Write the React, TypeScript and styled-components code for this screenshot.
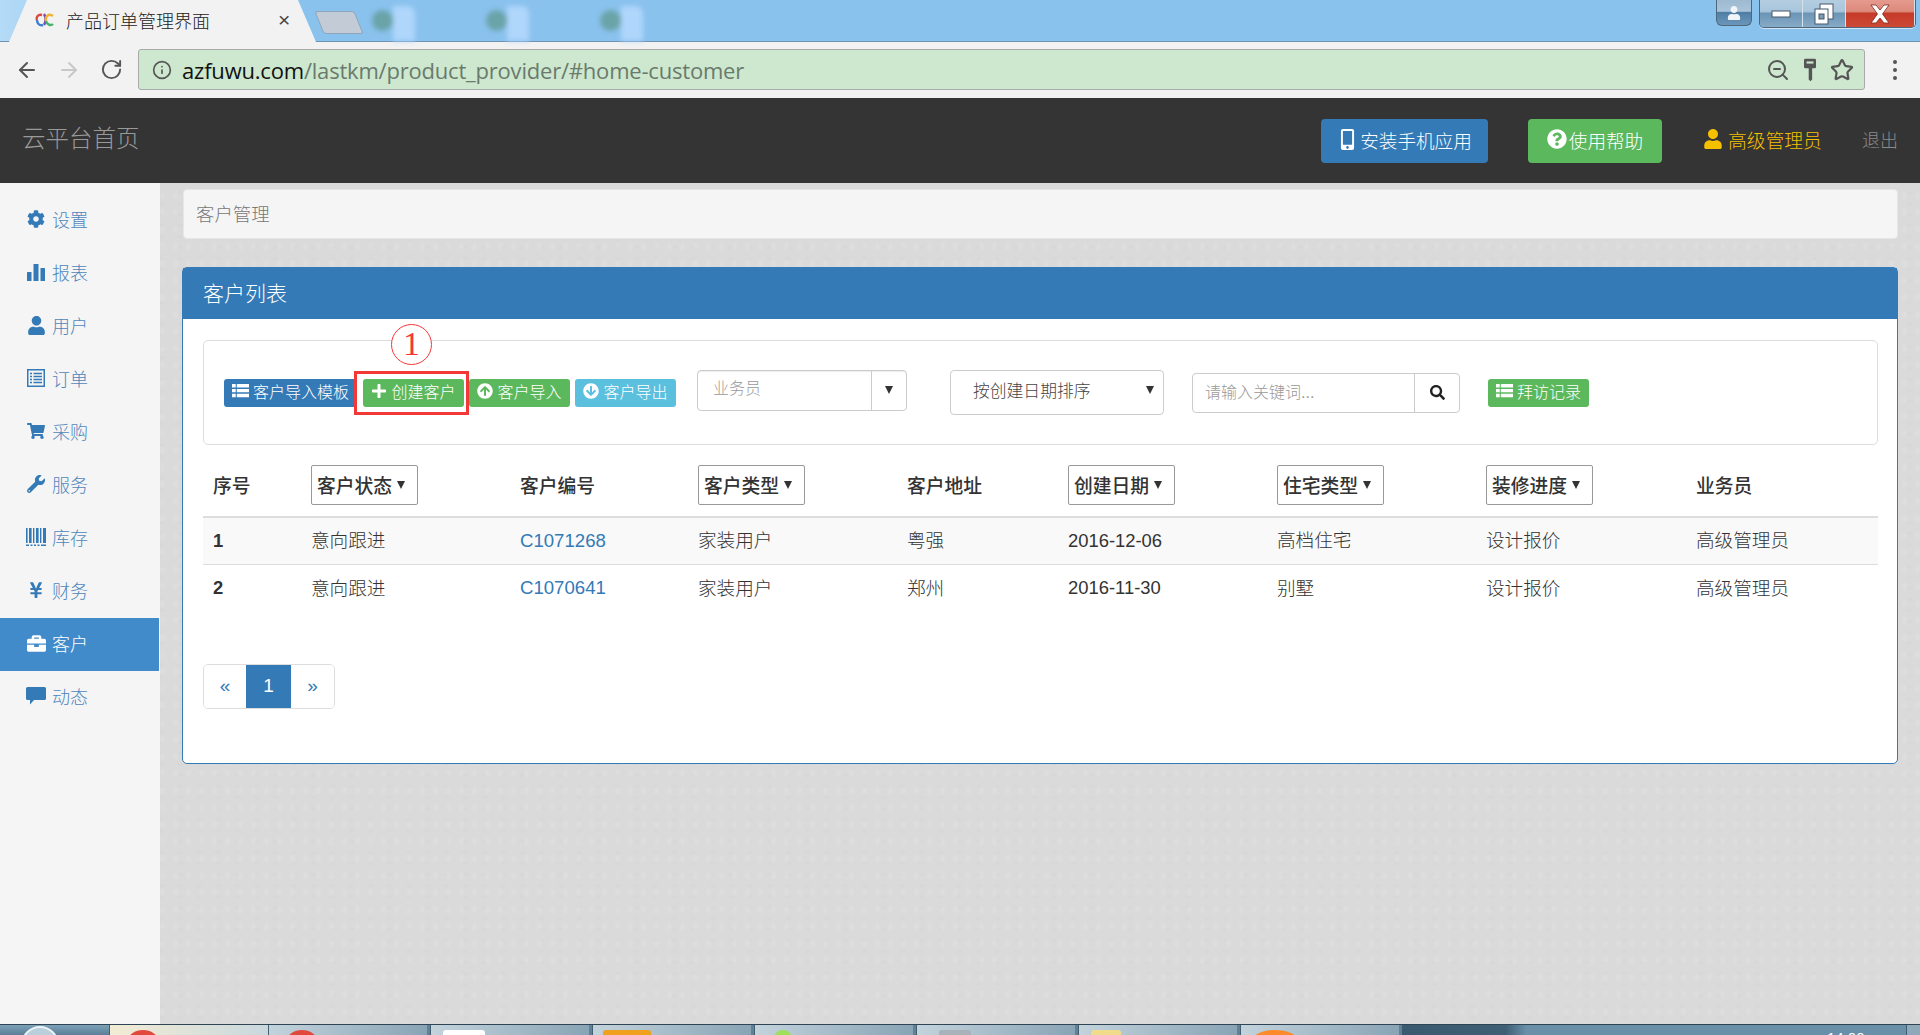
import React from 'react'
import styled, { createGlobalStyle } from 'styled-components'
import { FaCog, FaUser, FaShoppingCart, FaWrench, FaYenSign, FaBriefcase, FaMobileAlt, FaQuestionCircle, FaPlus, FaArrowCircleUp, FaArrowCircleDown, FaSearch } from 'react-icons/fa'
import { ArrowLeft, ArrowRight, RotateCw, Info, ZoomOut, Star } from 'lucide-react'

const FONT = `"Liberation Sans", "Noto Sans CJK SC", sans-serif`
const COLUMNS = '98px 209px 178px 209px 161px 209px 209px 210px 1fr'

const GlobalStyle = createGlobalStyle`
  html, body {
    margin: 0;
    padding: 0;
    height: 100%;
    overflow: hidden;
    font-family: ${FONT};
    color: #333;
  }
  * { box-sizing: border-box; }
`

const Screen = styled.div`
  width: 1920px;
  height: 1035px;
  display: flex;
  flex-direction: column;
  overflow: hidden;
  background-color: #dadada;
  background-image:
    radial-gradient(rgba(255, 255, 255, 0.1) 1px, transparent 4px),
    radial-gradient(rgba(0, 0, 0, 0.012) 1px, transparent 4px);
  background-size: 13px 17px, 19px 11px;
`

/* browser frame */
const TabStrip = styled.div`
  height: 42px;
  flex: none;
  display: flex;
  align-items: flex-end;
  padding-left: 9px;
  background: linear-gradient(90deg, #b4dbf7 0, #8ac2ee 8%, #8ac2ee 100%);
  border-bottom: 1px solid #6f93b3;
  position: relative;
`

const ActiveTab = styled.div`
  width: 307px;
  height: 42px;
  margin-bottom: -1px;
  display: flex;
  align-items: center;
  padding: 0 0 3px 26px;
  background: #f2f2f2;
  clip-path: polygon(0 100%, 18px 0, 289px 0, 307px 100%);
  font-size: 18px;
  font-weight: 300;
  color: #222;
`

const TabTitle = styled.span`
  margin-left: 11px;
  width: 212px;
`

const TabClose = styled.span`
  font-size: 21px;
  color: #444;
`

const NewTab = styled.div`
  width: 40px;
  height: 23px;
  margin: 0 0 7px 3px;
  background: #c3ccd6;
  border: 1px solid #8fa5ba;
  border-radius: 3px;
  transform: skewX(22deg);
`

const BlurredDoc = styled.div<{ $gap: number }>`
  width: 46px;
  height: 35px;
  flex: none;
  margin: 0 0 0 ${({ $gap }) => $gap}px;
  display: flex;
  align-items: flex-start;
  filter: blur(2.5px);
`

const DocDot = styled.i`
  display: block;
  width: 21px;
  height: 21px;
  margin-top: 4px;
  border-radius: 50%;
  background: #6aa3a8;
`

const DocSheet = styled.i`
  display: block;
  width: 22px;
  height: 35px;
  border-radius: 0 8px 0 0;
  background: #afd6fb;
`

const WindowButtons = styled.div`
  position: absolute;
  top: 0;
  right: 4px;
  display: flex;
  align-items: flex-start;
`

const UserButton = styled.div`
  width: 36px;
  height: 26px;
  margin-right: 7px;
  display: flex;
  align-items: center;
  justify-content: center;
  background: linear-gradient(#9dbad2 0, #a9c4da 45%, #4f7ea5 50%, #6b96ba 100%);
  border: 1px solid #50667c;
  border-top: none;
  border-radius: 0 0 6px 6px;
  color: #f2f5f8;
`

const ControlGroup = styled.div`
  display: flex;
  height: 28px;
  border: 1px solid #50667c;
  border-top: none;
  border-radius: 0 0 5px 5px;
  overflow: hidden;
  box-shadow: 0 1px 0 #cfe4f5;
`

const ControlButton = styled.div<{ $width: number; $danger?: boolean }>`
  width: ${({ $width }) => $width}px;
  display: flex;
  align-items: center;
  justify-content: center;
  border-right: 1px solid #d5e0ea;
  background: ${({ $danger }) =>
    $danger
      ? 'linear-gradient(#e59a8e 0, #dc8a7c 42%, #c63a28 50%, #cc4a36 100%)'
      : 'linear-gradient(#b4cde0 0, #a8c6dc 42%, #6c95b5 50%, #86abc7 100%)'};
`

const Toolbar = styled.div`
  height: 56px;
  flex: none;
  display: flex;
  align-items: center;
  background: #f2f2f2;
  padding: 0 0 1px 15px;
`

const NavIcon = styled.span<{ $gap?: number }>`
  display: flex;
  margin-left: ${({ $gap = 0 }) => $gap}px;
`

const AddressBar = styled.div`
  width: 1727px;
  height: 41px;
  margin-left: 15px;
  display: flex;
  align-items: center;
  padding: 0 10px 0 13px;
  background: #cde8cf;
  border: 1px solid #aaa;
  border-radius: 3px;
`

const Url = styled.div`
  flex: 1;
  margin-left: 10px;
  font-family: "Open Sans", sans-serif;
  font-size: 22px;
  letter-spacing: -0.2px;
  color: #6a7a6d;
`

const UrlHost = styled.span`
  color: #111;
`

const MenuDots = styled.div`
  margin-left: 28px;
  display: flex;
  flex-direction: column;
  gap: 4px;
`

const MenuDot = styled.i`
  display: block;
  width: 4px;
  height: 4px;
  border-radius: 50%;
  background: #555;
`

/* app header */
const Header = styled.header`
  height: 85px;
  flex: none;
  display: flex;
  align-items: center;
  padding-left: 22px;
  background: #343434;
`

const Brand = styled.div`
  width: 1299px;
  padding-bottom: 7px;
  font-size: 23.5px;
  font-weight: 300;
  color: #999;
`

const HeaderButton = styled.div<{ $color: string; $width: number }>`
  width: ${({ $width }) => $width}px;
  height: 44px;
  margin-right: ${({ $width }) => ($width > 140 ? 40 : 41)}px;
  padding-bottom: 3px;
  display: flex;
  align-items: center;
  justify-content: center;
  gap: 2px;
  background: ${({ $color }) => $color};
  border-radius: 4px;
  font-size: 18.6px;
  font-weight: 300;
  color: #fff;
`

const HeaderUser = styled.div`
  display: flex;
  align-items: center;
  gap: 5px;
  width: 159px;
  padding-bottom: 3px;
  font-size: 18.8px;
  font-weight: 300;
  color: #f5c000;
`

const Logout = styled.div`
  padding-bottom: 3px;
  font-size: 18px;
  font-weight: 300;
  color: #8a8a8a;
`

/* page */
const Main = styled.div`
  flex: 1;
  display: flex;
  min-height: 0;
`

const Sidebar = styled.nav`
  width: 160px;
  flex: none;
  padding-top: 11px;
  background: #f5f5f5;
`

const NavItem = styled.div<{ $active?: boolean }>`
  height: 53px;
  width: 159px;
  display: flex;
  align-items: center;
  gap: 6px;
  padding: 0 0 3px 26px;
  font-size: 18px;
  font-weight: 300;
  color: ${({ $active }) => ($active ? '#fff' : '#4f86bb')};
  background: ${({ $active }) => ($active ? '#428bca' : 'transparent')};
`

const NavGlyph = styled.span<{ $active?: boolean }>`
  width: 20px;
  display: flex;
  justify-content: center;
  color: ${({ $active }) => ($active ? '#fff' : '#337ab7')};
`

const Content = styled.main`
  flex: 1;
  padding: 6px 22px 0 23px;
`

const Breadcrumb = styled.div`
  height: 50px;
  display: flex;
  align-items: center;
  padding: 0 0 2px 12px;
  background: #f5f5f5;
  border: 1px solid #e6e6e6;
  border-radius: 4px;
  font-size: 18.4px;
  font-weight: 300;
  color: #777;
`

const Panel = styled.section`
  height: 497px;
  margin: 28px 0 0 -1px;
  padding: 0 19px 0 20px;
  background: #fff;
  border: 1px solid #337ab7;
  border-radius: 5px;
`

const PanelHeading = styled.h2`
  height: 51px;
  margin: 0 -19px 21px -20px;
  padding: 0 0 4px 20px;
  display: flex;
  align-items: center;
  background: #337ab7;
  font-size: 21px;
  font-weight: 300;
  color: #fff;
`

const FilterBar = styled.div`
  height: 105px;
  display: flex;
  align-items: center;
  padding-left: 20px;
  border: 1px solid #ddd;
  border-radius: 5px;
`

const SmallButton = styled.div<{ $color: string; $width: number }>`
  width: ${({ $width }) => $width}px;
  height: 28px;
  flex: none;
  padding-bottom: 3px;
  display: flex;
  align-items: center;
  justify-content: center;
  gap: 4px;
  background: ${({ $color }) => $color};
  border-radius: 3px;
  font-size: 16px;
  font-weight: 300;
  color: #fff;
`

const ButtonSlot = styled.div<{ $left: number; $right?: number }>`
  position: relative;
  flex: none;
  margin: 0 ${({ $right = 0 }) => $right}px 0 ${({ $left }) => $left}px;
`

const Highlight = styled.div`
  position: absolute;
  left: -9px;
  right: -5px;
  top: -8px;
  bottom: -8px;
  border: 3px solid #f33838;
`

const StepBadge = styled.div`
  position: absolute;
  left: 28px;
  top: -55px;
  width: 41px;
  height: 41px;
  display: flex;
  align-items: center;
  justify-content: center;
  border: 1px solid #f33838;
  border-radius: 50%;
  background: #fff;
  font-family: "Liberation Serif", serif;
  font-size: 34px;
  line-height: 1;
  color: #f33838;
`

const ComboBox = styled.div`
  width: 210px;
  height: 41px;
  flex: none;
  margin-top: -5px;
  display: flex;
  background: #fff;
  border: 1px solid #ccc;
  border-radius: 4px;
  box-shadow: inset 0 1px 1px rgba(0, 0, 0, 0.075);
`

const ComboValue = styled.div`
  flex: 1;
  padding: 0 0 6px 15px;
  display: flex;
  align-items: center;
  font-size: 16px;
  font-weight: 300;
  color: #999;
`

const ComboToggle = styled.div`
  width: 35px;
  display: flex;
  align-items: center;
  justify-content: center;
  border-left: 1px solid #ccc;
`

const Caret = styled.i<{ $size?: number; $color?: string }>`
  display: inline-block;
  flex: none;
  border-left: ${({ $size = 4 }) => $size}px solid transparent;
  border-right: ${({ $size = 4 }) => $size}px solid transparent;
  border-top: ${({ $size = 4 }) => $size * 2}px solid ${({ $color = '#333' }) => $color};
`

const SortSelect = styled.div`
  width: 214px;
  height: 45px;
  flex: none;
  margin: -1px 0 0 43px;
  display: flex;
  align-items: center;
  justify-content: space-between;
  padding: 0 9px 4px 22px;
  background: #fff;
  border: 1px solid #ccc;
  border-radius: 4px;
  font-size: 16.8px;
  font-weight: 300;
  color: #444;
`

const SearchGroup = styled.div`
  width: 268px;
  height: 40px;
  flex: none;
  margin-left: 28px;
  display: flex;
  border: 1px solid #ccc;
  border-radius: 4px;
`

const SearchInput = styled.div`
  flex: 1;
  display: flex;
  align-items: center;
  padding: 0 0 3px 12px;
  font-size: 16px;
  font-weight: 300;
  color: #999;
`

const SearchButton = styled.div`
  width: 45px;
  display: flex;
  align-items: center;
  justify-content: center;
  border-left: 1px solid #ccc;
  color: #222;
`

const TableHead = styled.div`
  height: 73px;
  display: grid;
  grid-template-columns: ${COLUMNS};
  align-items: center;
  padding-top: 8px;
  border-bottom: 2px solid #ddd;
`

const HeadCell = styled.div`
  padding: 0 0 0 10px;
  font-size: 18.8px;
  font-weight: 500;
  color: #333;
`

const HeadFilter = styled.div`
  width: 107px;
  height: 40px;
  margin-left: 10px;
  display: flex;
  align-items: center;
  gap: 5px;
  padding: 0 0 0 5px;
  background: #fff;
  border: 1px solid #999;
  border-radius: 2px;
  font-size: 18.8px;
  font-weight: 500;
  color: #333;
`

const TableRow = styled.div<{ $striped?: boolean }>`
  height: 47px;
  display: grid;
  grid-template-columns: ${COLUMNS};
  align-items: center;
  background: ${({ $striped }) => ($striped ? '#f9f9f9' : '#fff')};
  border-bottom: ${({ $striped }) => ($striped ? '1px solid #ddd' : 'none')};
`

const Cell = styled.div`
  padding: 0 0 5px 10px;
  font-size: 18.6px;
  font-weight: 300;
  color: #333;
`

const NumberCell = styled.div<{ $bold?: boolean }>`
  padding: 0 0 1px 10px;
  font-size: 18.4px;
  font-weight: ${({ $bold }) => ($bold ? 700 : 400)};
  color: #333;
`

const CodeLink = styled(NumberCell)`
  font-size: 18.6px;
  color: #337ab7;
`

const Pagination = styled.div`
  width: 132px;
  height: 45px;
  margin-top: 52px;
  display: flex;
  border: 1px solid #ddd;
  border-radius: 5px;
  overflow: hidden;
  font-size: 19px;
`

const PageLink = styled.div<{ $active?: boolean; $width: number }>`
  width: ${({ $width }) => $width}px;
  display: flex;
  align-items: center;
  justify-content: center;
  padding-bottom: 2px;
  color: ${({ $active }) => ($active ? '#fff' : '#337ab7')};
  background: ${({ $active }) => ($active ? '#337ab7' : '#fff')};
`

/* windows taskbar, only its top edge is in the picture */
const Taskbar = styled.div`
  height: 11px;
  flex: none;
  display: flex;
  overflow: hidden;
  background: #5f8199;
  border-top: 1px solid #2f4454;
`

const StartArea = styled.div`
  width: 109px;
  flex: none;
  display: flex;
  padding: 1px 0 0 21px;
  background: linear-gradient(#7ba0b8, #5c7f97);
`

const Orb = styled.div`
  width: 38px;
  height: 38px;
  border-radius: 50%;
  background: #b9cfdc;
  border: 2px solid #ecf3f7;
`

const TaskButton = styled.div<{ $active?: boolean }>`
  width: 159px;
  flex: none;
  margin-right: ${({ $active }) => ($active ? 0 : 3)}px;
  display: flex;
  padding-top: 5px;
  background: ${({ $active }) =>
    $active ? 'linear-gradient(90deg, #f3ecd4, #c9d8de)' : 'linear-gradient(90deg, #c3d3dc, #88a4b5)'};
  border-left: 1px solid #44606f;
`

const TaskGlyph = styled.i<{ $color: string; $left: number; $width: number; $round?: boolean }>`
  display: block;
  width: ${({ $width }) => $width}px;
  height: 22px;
  margin-left: ${({ $left }) => $left}px;
  background: ${({ $color }) => $color};
  border-radius: ${({ $round }) => ($round ? '50%' : '3px 3px 0 0')};
`

const Tray = styled.div`
  flex: 1;
  display: flex;
  padding: 3px 0 0 425px;
  background: linear-gradient(90deg, #3a5a70 0, #3f5f75 20%, #6a8fa8 24%, #6a8fa8 100%);
  font-size: 15px;
  line-height: 20px;
  color: #fff;
`

const ShowDesktop = styled.div`
  width: 14px;
  margin: -3px 0 0 auto;
  background: #8fa9ba;
  border-left: 1px solid #3f5f75;
`

/* glyphs that the icon packs draw too differently */
const StatsIcon = ({ size = 18 }: { size?: number }) => (
  <svg width={size} height={size} viewBox="0 0 18 18" fill="currentColor">
    <rect x="0" y="9" width="4.5" height="9" rx="0.5" />
    <rect x="6.5" y="1" width="5" height="17" rx="0.5" />
    <rect x="13.5" y="5" width="4.5" height="13" rx="0.5" />
  </svg>
)

const ListAltIcon = () => (
  <svg width="18" height="18" viewBox="0 0 18 18" fill="none" stroke="currentColor">
    <rect x="0.75" y="0.75" width="16.5" height="16.5" strokeWidth="1.5" />
    <path d="M3 4.5h2M6.5 4.5H15M3 7.5h2M6.5 7.5H15M3 10.5h2M6.5 10.5H15M3 13.5h2M6.5 13.5H15" strokeWidth="1.6" />
  </svg>
)

const BarcodeIcon = () => (
  <svg width="20" height="18" viewBox="0 0 20 18" fill="currentColor">
    <path d="M0 0h1.6v15H0zM3 0h2.6v15H3zM7 0h1.4v15H7zM10 0h2.6v15H10zM14 0h1.4v15H14zM17 0h3v15h-3zM0 16.4h3V18H0zM4.500 16.4h2V18h-2zM8 16.4h2V18H8zM11.500 16.4h2V18h-2zM15 16.4h5V18h-5z" />
  </svg>
)

const CommentIcon = () => (
  <svg width="20" height="18" viewBox="0 0 20 18" fill="currentColor">
    <path d="M1.500 0h17A1.500 1.500 0 0 1 20 1.500v10a1.500 1.500 0 0 1-1.500 1.500H8l-4 4.500V13H1.500A1.500 1.500 0 0 1 0 11.500v-10A1.500 1.500 0 0 1 1.500 0z" />
  </svg>
)

const RowsIcon = ({ size = 17 }: { size?: number }) => (
  <svg width={size} height={size} viewBox="0 0 16 16" fill="currentColor">
    <path d="M0 1h3.500v3.200H0zM4.500 1H16v3.200H4.500zM0 5.600h3.500v3.200H0zM4.500 5.600H16v3.200H4.500zM0 10.200h3.500v3.200H0zM4.500 10.200H16v3.200H4.500z" />
  </svg>
)

const KeyIcon = () => (
  <svg width="12" height="24" viewBox="0 0 14 26" fill="#555">
    <path d="M1.500 0h11A1.500 1.500 0 0 1 14 1.500v8A1.500 1.500 0 0 1 12.500 11H9.500v13l-2 2-2-2V11H1.500A1.500 1.500 0 0 1 0 9.500v-8A1.500 1.500 0 0 1 1.500 0z" />
    <rect x="3" y="3" width="8" height="2.500" fill="#cde8cf" />
  </svg>
)

const TabFavicon = () => (
  <svg width="20" height="14" viewBox="0 0 20 14" fill="none" strokeWidth="2.400">
    <path d="M7 2C3 1 1 4 2 7" stroke="#e0483e" />
    <path d="M2 7c0 4 3 6 6 5" stroke="#3a7fd0" />
    <path d="M9 1c2 3 2 8 0 11" stroke="#7a4bb5" />
    <path d="M18 3c-4-3-8 0-7 5" stroke="#f2b233" />
    <path d="M11 8c1 4 5 5 7 3" stroke="#45b36b" />
  </svg>
)

const MinimizeGlyph = () => (
  <svg width="20" height="10" viewBox="0 0 20 10">
    <rect x="1" y="2" width="18" height="6" fill="#fff" stroke="#46586a" />
  </svg>
)

const RestoreGlyph = () => (
  <svg width="20" height="22" viewBox="0 0 20 22" fill="#fff" stroke="#46586a">
    <rect x="6" y="1" width="13" height="15" />
    <rect x="1" y="6" width="13" height="15" />
    <rect x="5" y="11" width="5" height="5" fill="#7d9cb5" />
  </svg>
)

const CloseGlyph = () => (
  <svg width="20" height="20" viewBox="0 0 20 20">
    <path d="M1 1h5l4 5 4-5h5l-6.500 9L19 19h-5l-4-5-4 5H1l6.500-9z" fill="#fff" stroke="#7d2a20" strokeWidth="0.8" />
  </svg>
)

const NAV_ITEMS = [
  { label: '设置', icon: <FaCog size={18} /> },
  { label: '报表', icon: <StatsIcon /> },
  { label: '用户', icon: <FaUser size={19} /> },
  { label: '订单', icon: <ListAltIcon /> },
  { label: '采购', icon: <FaShoppingCart size={18} /> },
  { label: '服务', icon: <FaWrench size={18} /> },
  { label: '库存', icon: <BarcodeIcon /> },
  { label: '财务', icon: <FaYenSign size={18} /> },
  { label: '客户', icon: <FaBriefcase size={19} />, active: true },
  { label: '动态', icon: <CommentIcon /> },
]

const HEAD_CELLS = [
  { label: '序号' },
  { label: '客户状态', filter: true },
  { label: '客户编号' },
  { label: '客户类型', filter: true },
  { label: '客户地址' },
  { label: '创建日期', filter: true },
  { label: '住宅类型', filter: true },
  { label: '装修进度', filter: true },
  { label: '业务员' },
]

const ROWS = [
  { no: '1', state: '意向跟进', code: 'C1071268', kind: '家装用户', address: '粤强', date: '2016-12-06', house: '高档住宅', progress: '设计报价', owner: '高级管理员' },
  { no: '2', state: '意向跟进', code: 'C1070641', kind: '家装用户', address: '郑州', date: '2016-11-30', house: '别墅', progress: '设计报价', owner: '高级管理员' },
]

export default function App() {
  return (
    <Screen>
      <GlobalStyle />
      <TabStrip>
        <ActiveTab>
          <TabFavicon />
          <TabTitle>产品订单管理界面</TabTitle>
          <TabClose>×</TabClose>
        </ActiveTab>
        <NewTab />
        <BlurredDoc $gap={13}>
          <DocDot />
          <DocSheet />
        </BlurredDoc>
        <BlurredDoc $gap={68}>
          <DocDot />
          <DocSheet />
        </BlurredDoc>
        <BlurredDoc $gap={68}>
          <DocDot />
          <DocSheet />
        </BlurredDoc>
        <WindowButtons>
          <UserButton>
            <FaUser size={14} />
          </UserButton>
          <ControlGroup>
            <ControlButton $width={43}>
              <MinimizeGlyph />
            </ControlButton>
            <ControlButton $width={43}>
              <RestoreGlyph />
            </ControlButton>
            <ControlButton $width={69} $danger>
              <CloseGlyph />
            </ControlButton>
          </ControlGroup>
        </WindowButtons>
      </TabStrip>

      <Toolbar>
        <NavIcon>
          <ArrowLeft size={24} color="#555" />
        </NavIcon>
        <NavIcon $gap={18}>
          <ArrowRight size={24} color="#c8c8c8" />
        </NavIcon>
        <NavIcon $gap={19}>
          <RotateCw size={23} color="#555" />
        </NavIcon>
        <AddressBar>
          <Info size={20} color="#555" />
          <Url>
            <UrlHost>azfuwu.com</UrlHost>/lastkm/product_provider/#home-customer
          </Url>
          <NavIcon>
            <ZoomOut size={24} color="#555" />
          </NavIcon>
          <NavIcon $gap={14}>
            <KeyIcon />
          </NavIcon>
          <NavIcon $gap={14}>
            <Star size={24} color="#555" strokeWidth={2.2} />
          </NavIcon>
        </AddressBar>
        <MenuDots>
          <MenuDot />
          <MenuDot />
          <MenuDot />
        </MenuDots>
      </Toolbar>

      <Header>
        <Brand>云平台首页</Brand>
        <HeaderButton $color="#337ab7" $width={167}>
          <FaMobileAlt size={21} />
          安装手机应用
        </HeaderButton>
        <HeaderButton $color="#5cb85c" $width={134}>
          <FaQuestionCircle size={20} />
          使用帮助
        </HeaderButton>
        <HeaderUser>
          <FaUser size={20} />
          高级管理员
        </HeaderUser>
        <Logout>退出</Logout>
      </Header>

      <Main>
        <Sidebar>
          {NAV_ITEMS.map(item => (
            <NavItem key={item.label} $active={item.active}>
              <NavGlyph $active={item.active}>{item.icon}</NavGlyph>
              {item.label}
            </NavItem>
          ))}
        </Sidebar>

        <Content>
          <Breadcrumb>客户管理</Breadcrumb>
          <Panel>
            <PanelHeading>客户列表</PanelHeading>
            <FilterBar>
              <SmallButton $color="#337ab7" $width={133}>
                <RowsIcon />
                客户导入模板
              </SmallButton>
              <ButtonSlot $left={6}>
                <SmallButton $color="#5cb85c" $width={101}>
                  <FaPlus size={16} />
                  创建客户
                </SmallButton>
                <Highlight />
                <StepBadge>1</StepBadge>
              </ButtonSlot>
              <ButtonSlot $left={5}>
                <SmallButton $color="#5cb85c" $width={101}>
                  <FaArrowCircleUp size={16} />
                  客户导入
                </SmallButton>
              </ButtonSlot>
              <ButtonSlot $left={5} $right={21}>
                <SmallButton $color="#5bc0de" $width={101}>
                  <FaArrowCircleDown size={16} />
                  客户导出
                </SmallButton>
              </ButtonSlot>
              <ComboBox>
                <ComboValue>业务员</ComboValue>
                <ComboToggle>
                  <Caret />
                </ComboToggle>
              </ComboBox>
              <SortSelect>
                按创建日期排序
                <Caret />
              </SortSelect>
              <SearchGroup>
                <SearchInput>请输入关键词...</SearchInput>
                <SearchButton>
                  <FaSearch size={15} />
                </SearchButton>
              </SearchGroup>
              <ButtonSlot $left={28}>
                <SmallButton $color="#5cb85c" $width={101}>
                  <RowsIcon />
                  拜访记录
                </SmallButton>
              </ButtonSlot>
            </FilterBar>

            <TableHead>
              {HEAD_CELLS.map(cell =>
                cell.filter ? (
                  <HeadFilter key={cell.label}>
                    {cell.label}
                    <Caret />
                  </HeadFilter>
                ) : (
                  <HeadCell key={cell.label}>{cell.label}</HeadCell>
                )
              )}
            </TableHead>
            {ROWS.map((row, i) => (
              <TableRow key={row.no} $striped={i === 0}>
                <NumberCell $bold>{row.no}</NumberCell>
                <Cell>{row.state}</Cell>
                <CodeLink>{row.code}</CodeLink>
                <Cell>{row.kind}</Cell>
                <Cell>{row.address}</Cell>
                <NumberCell>{row.date}</NumberCell>
                <Cell>{row.house}</Cell>
                <Cell>{row.progress}</Cell>
                <Cell>{row.owner}</Cell>
              </TableRow>
            ))}

            <Pagination>
              <PageLink $width={42}>«</PageLink>
              <PageLink $width={45} $active>
                1
              </PageLink>
              <PageLink $width={43}>»</PageLink>
            </Pagination>
          </Panel>
        </Content>
      </Main>

      <Taskbar>
        <StartArea>
          <Orb />
        </StartArea>
        <TaskButton $active>
          <TaskGlyph $color="#e2493d" $left={18} $width={30} $round />
        </TaskButton>
        <TaskButton>
          <TaskGlyph $color="#e2493d" $left={18} $width={30} $round />
        </TaskButton>
        <TaskButton>
          <TaskGlyph $color="#fff" $left={12} $width={42} />
        </TaskButton>
        <TaskButton>
          <TaskGlyph $color="#efa01c" $left={10} $width={48} />
        </TaskButton>
        <TaskButton>
          <TaskGlyph $color="#9ee05a" $left={18} $width={20} $round />
        </TaskButton>
        <TaskButton>
          <TaskGlyph $color="#a9b2b8" $left={22} $width={32} />
        </TaskButton>
        <TaskButton>
          <TaskGlyph $color="#f1dc8c" $left={12} $width={30} />
        </TaskButton>
        <TaskButton>
          <TaskGlyph $color="#fd8a2c" $left={11} $width={46} $round />
        </TaskButton>
        <Tray>
          14:00
          <ShowDesktop />
        </Tray>
      </Taskbar>
    </Screen>
  )
}
